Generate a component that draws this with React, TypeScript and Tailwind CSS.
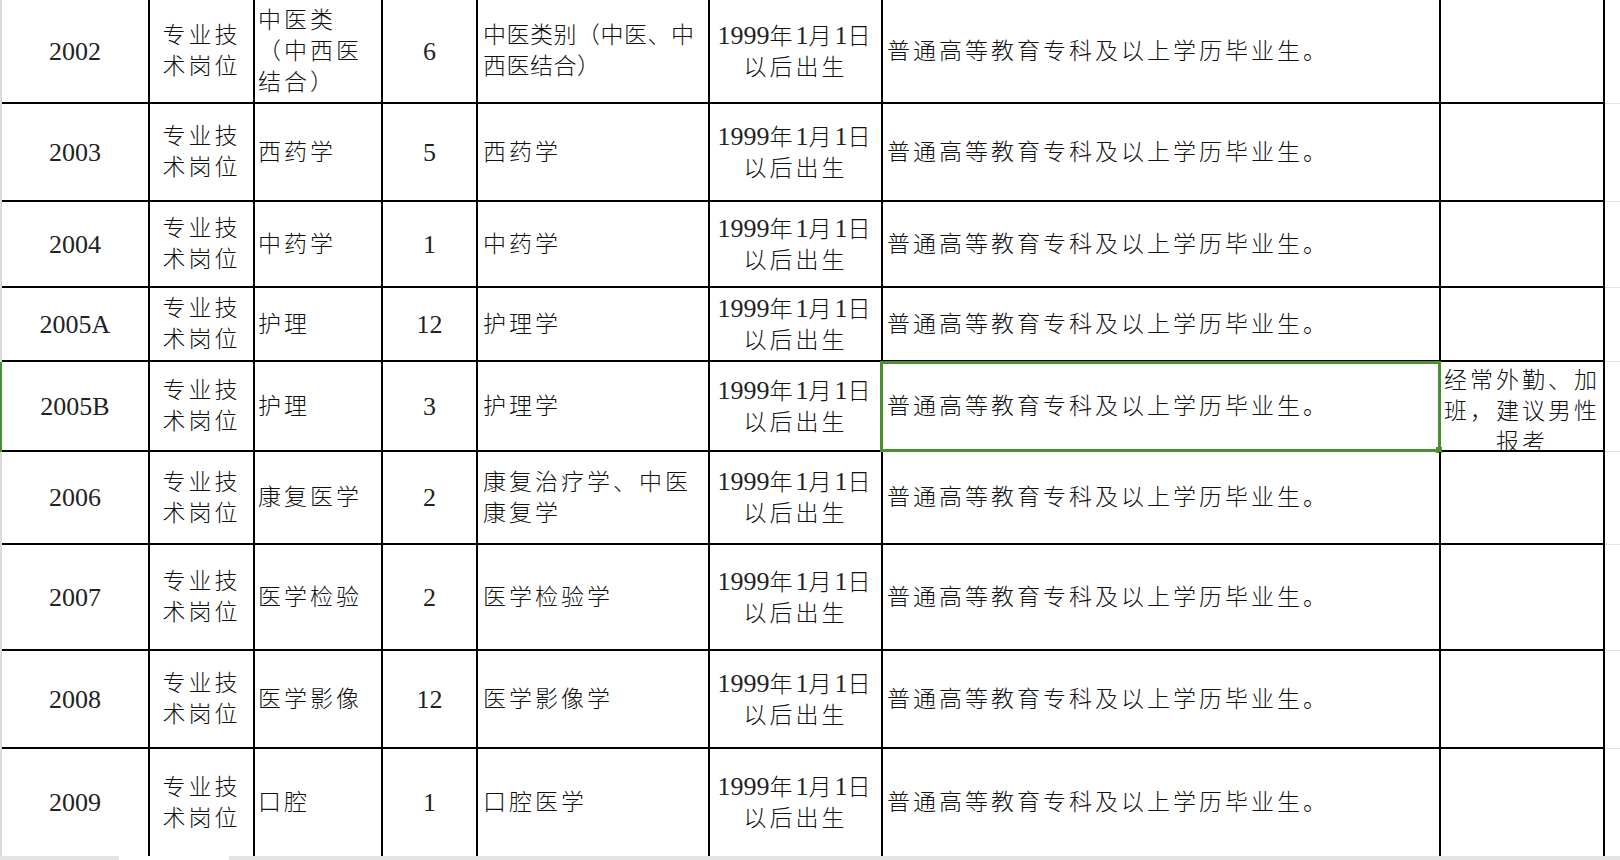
import React from 'react';

type Row = {
  code: string;
  h: string;
  major: string[];
  count: string;
  req: string[];
  tight?: boolean;
  selected?: boolean;
  remark?: string[];
  last?: boolean;
};

const rows: Row[] = [
  { code: '2002', h: 'h-[104px]', major: ['中医类', '（中西医', '结合）'], count: '6', req: ['中医类别（中医、中', '西医结合）'], tight: true },
  { code: '2003', h: 'h-[98px]', major: ['西药学'], count: '5', req: ['西药学'] },
  { code: '2004', h: 'h-[86px]', major: ['中药学'], count: '1', req: ['中药学'] },
  { code: '2005A', h: 'h-[74px]', major: ['护理'], count: '12', req: ['护理学'] },
  { code: '2005B', h: 'h-[90px]', major: ['护理'], count: '3', req: ['护理学'], selected: true, remark: ['经常外勤、加', '班，建议男性', '报考'] },
  { code: '2006', h: 'h-[93px]', major: ['康复医学'], count: '2', req: ['康复治疗学、中医', '康复学'] },
  { code: '2007', h: 'h-[106px]', major: ['医学检验'], count: '2', req: ['医学检验学'] },
  { code: '2008', h: 'h-[98px]', major: ['医学影像'], count: '12', req: ['医学影像学'] },
  { code: '2009', h: 'h-[107px]', major: ['口腔'], count: '1', req: ['口腔医学'], last: true },
];

// numbers are Times-like and a bit larger than the CJK text
function Num({ children }: { children: React.ReactNode }) {
  return <span className="text-[26px] tracking-normal text-[#222]">{children}</span>;
}

function Lines({ lines }: { lines: string[] }) {
  return (
    <div className="whitespace-nowrap">
      {lines.map((l, i) => (
        <div key={i}>{l}</div>
      ))}
    </div>
  );
}

export default function App() {
  return (
    <div
      className="w-[1620px] h-[860px] overflow-hidden bg-white flex flex-col text-[#111] text-[23px] tracking-[3px] leading-[31px] font-light"
      style={{ fontFamily: '"Liberation Serif", "Noto Sans CJK SC", serif' }}
    >
      {rows.map((r) => {
        const cell = r.last ? 'border-r-2 border-black' : 'border-r-2 border-b-2 border-black';
        return (
          <div key={r.code} className={`flex shrink-0 ${r.h}`}>
            {/* row header edge */}
            <div className={`w-[2px] shrink-0 ${r.selected ? 'bg-[#4b8f2f]' : 'bg-[#dadada]'}`} />

            {/* 岗位代码 */}
            <div className={`w-[148px] shrink-0 flex items-center justify-center ${cell}`}>
              <Num>{r.code}</Num>
            </div>

            {/* 岗位类别 */}
            <div className={`w-[105px] shrink-0 flex items-center justify-center text-center ${cell}`}>
              <Lines lines={['专业技', '术岗位']} />
            </div>

            {/* 岗位名称 */}
            <div className={`w-[128px] shrink-0 flex items-center pl-[3px] ${cell}`}>
              <Lines lines={r.major} />
            </div>

            {/* 人数 */}
            <div className={`w-[95px] shrink-0 flex items-center justify-center ${cell}`}>
              <Num>{r.count}</Num>
            </div>

            {/* 专业 */}
            <div className={`w-[232px] shrink-0 flex items-center overflow-hidden pl-[5px] ${r.tight ? 'tracking-[0.5px]' : ''} ${cell}`}>
              <Lines lines={r.req} />
            </div>

            {/* 年龄 */}
            <div className={`w-[173px] shrink-0 flex items-center justify-center text-center ${cell}`}>
              <div className="whitespace-nowrap">
                <div>
                  <Num>1999</Num>年<Num>1</Num>月<Num>1</Num>日
                </div>
                <div>以后出生</div>
              </div>
            </div>

            {/* 学历 */}
            <div className={`relative w-[558px] shrink-0 flex items-center pl-[4px] ${cell}`}>
              <span className="whitespace-nowrap">普通高等教育专科及以上学历毕业生。</span>
              {r.selected && (
                <div className="absolute -top-[1px] -left-[3px] -right-[2px] -bottom-[2px] border-[3px] border-[#4b8f2f]">
                  <div className="absolute -right-[4px] -bottom-[4px] w-[6px] h-[6px] bg-[#4b8f2f]" />
                </div>
              )}
            </div>

            {/* 备注 */}
            <div className={`w-[164px] shrink-0 flex items-center justify-center overflow-hidden text-center ${r.remark ? 'pt-[10px]' : ''} ${cell}`}>
              {r.remark && <Lines lines={r.remark} />}
            </div>

            <div className={`flex-1 ${r.last ? '' : 'border-b border-[#e4e4e4]'}`} />
          </div>
        );
      })}

      {/* horizontal scrollbar strip */}
      <div className="flex h-[4px] shrink-0">
        <div className="w-[119px] bg-[#e3e3e3]" />
        <div className="w-[110px] bg-white" />
        <div className="flex-1 bg-[#e3e3e3]" />
      </div>
    </div>
  );
}
